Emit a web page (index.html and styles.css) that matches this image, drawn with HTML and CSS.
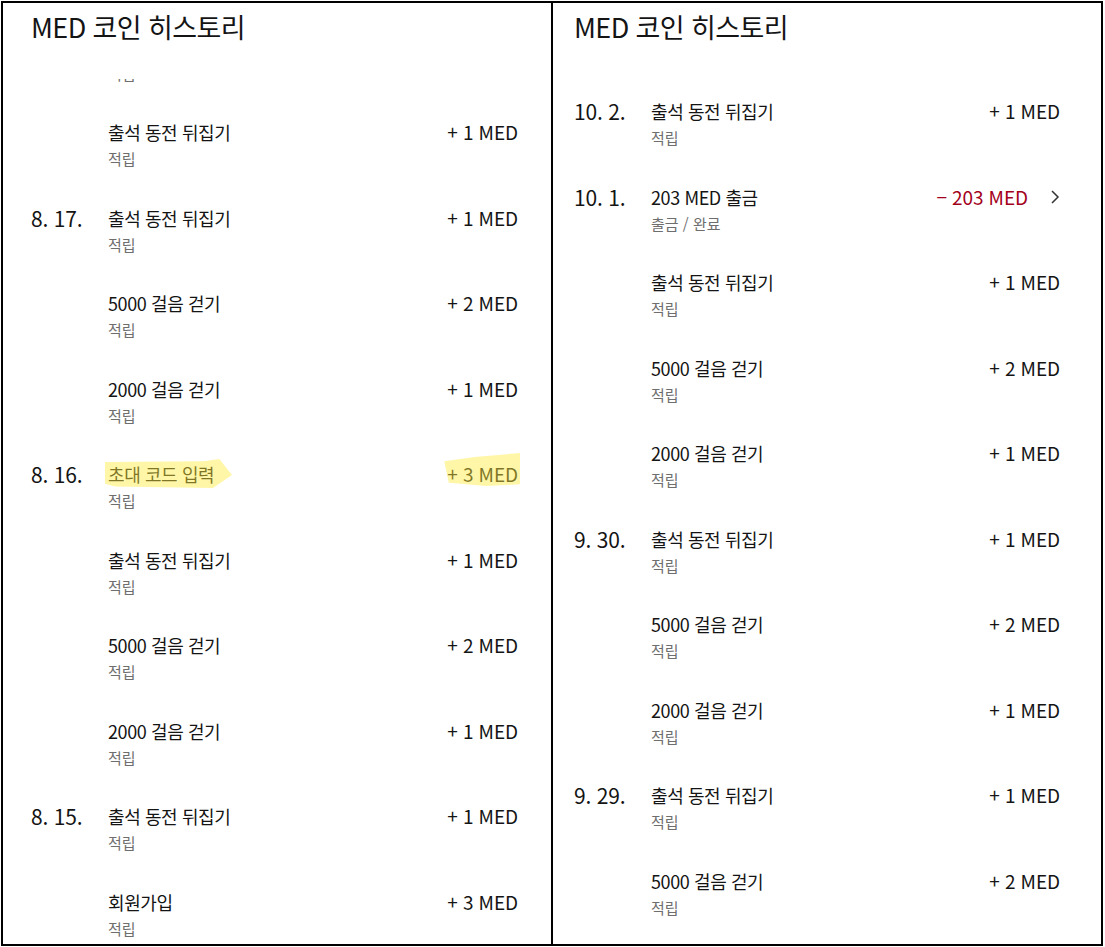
FILE: index.html
```html
<!DOCTYPE html>
<html lang="ko">
<head>
<meta charset="utf-8">
<title>MED 코인 히스토리</title>
<link rel="stylesheet" href="styles.css">
</head>
<body>
<div class="frame">
  <section class="panel panel-left">
    <header class="head"><h1>MED 코인 히스토리</h1></header>
    <div class="list">
      <div class="list-inner scrolled">
        <div class="row"><div class="date"></div><div class="info"><div class="name">2000 걸음 걷기</div><div class="sub">적립</div></div><div class="amt">+ 1 MED</div></div>
        <div class="row"><div class="date"></div><div class="info"><div class="name">출석 동전 뒤집기</div><div class="sub">적립</div></div><div class="amt">+ 1 MED</div></div>
        <div class="row"><div class="date">8. 17.</div><div class="info"><div class="name">출석 동전 뒤집기</div><div class="sub">적립</div></div><div class="amt">+ 1 MED</div></div>
        <div class="row"><div class="date"></div><div class="info"><div class="name">5000 걸음 걷기</div><div class="sub">적립</div></div><div class="amt">+ 2 MED</div></div>
        <div class="row"><div class="date"></div><div class="info"><div class="name">2000 걸음 걷기</div><div class="sub">적립</div></div><div class="amt">+ 1 MED</div></div>
        <div class="row"><div class="date">8. 16.</div><div class="info"><div class="name"><span class="mark mark-name">초대 코드 입력</span></div><div class="sub">적립</div></div><div class="amt"><span class="mark mark-amt">+ 3 MED</span></div></div>
        <div class="row"><div class="date"></div><div class="info"><div class="name">출석 동전 뒤집기</div><div class="sub">적립</div></div><div class="amt">+ 1 MED</div></div>
        <div class="row"><div class="date"></div><div class="info"><div class="name">5000 걸음 걷기</div><div class="sub">적립</div></div><div class="amt">+ 2 MED</div></div>
        <div class="row"><div class="date"></div><div class="info"><div class="name">2000 걸음 걷기</div><div class="sub">적립</div></div><div class="amt">+ 1 MED</div></div>
        <div class="row"><div class="date">8. 15.</div><div class="info"><div class="name">출석 동전 뒤집기</div><div class="sub">적립</div></div><div class="amt">+ 1 MED</div></div>
        <div class="row"><div class="date"></div><div class="info"><div class="name">회원가입</div><div class="sub">적립</div></div><div class="amt">+ 3 MED</div></div>
      </div>
    </div>
  </section>
  <section class="panel panel-right">
    <header class="head"><h1>MED 코인 히스토리</h1></header>
    <div class="list">
      <div class="list-inner">
        <div class="row"><div class="date">10. 2.</div><div class="info"><div class="name">출석 동전 뒤집기</div><div class="sub">적립</div></div><div class="amt">+ 1 MED</div></div>
        <div class="row"><div class="date">10. 1.</div><div class="info"><div class="name">203 MED 출금</div><div class="sub">출금 / 완료</div></div><div class="amt amt-out"><span class="neg">− 203 MED</span><svg class="chev" width="10" height="16" viewBox="0 0 10 16"><polyline points="2,2 8,8 2,14" fill="none" stroke="#333" stroke-width="1.5"/></svg></div></div>
        <div class="row"><div class="date"></div><div class="info"><div class="name">출석 동전 뒤집기</div><div class="sub">적립</div></div><div class="amt">+ 1 MED</div></div>
        <div class="row"><div class="date"></div><div class="info"><div class="name">5000 걸음 걷기</div><div class="sub">적립</div></div><div class="amt">+ 2 MED</div></div>
        <div class="row"><div class="date"></div><div class="info"><div class="name">2000 걸음 걷기</div><div class="sub">적립</div></div><div class="amt">+ 1 MED</div></div>
        <div class="row"><div class="date">9. 30.</div><div class="info"><div class="name">출석 동전 뒤집기</div><div class="sub">적립</div></div><div class="amt">+ 1 MED</div></div>
        <div class="row"><div class="date"></div><div class="info"><div class="name">5000 걸음 걷기</div><div class="sub">적립</div></div><div class="amt">+ 2 MED</div></div>
        <div class="row"><div class="date"></div><div class="info"><div class="name">2000 걸음 걷기</div><div class="sub">적립</div></div><div class="amt">+ 1 MED</div></div>
        <div class="row"><div class="date">9. 29.</div><div class="info"><div class="name">출석 동전 뒤집기</div><div class="sub">적립</div></div><div class="amt">+ 1 MED</div></div>
        <div class="row"><div class="date"></div><div class="info"><div class="name">5000 걸음 걷기</div><div class="sub">적립</div></div><div class="amt">+ 2 MED</div></div>
      </div>
    </div>
  </section>
</div>
</body>
</html>
```

FILE: styles.css
```css
html, body {
  margin: 0;
  padding: 0;
  background: #fff;
}
body {
  padding: 1px;
  font-family: "Noto Sans CJK KR", "Noto Sans", sans-serif;
  color: #141414;
}
.frame {
  display: flex;
  width: 1103px;
  height: 945px;
}
.panel {
  box-sizing: border-box;
  height: 945px;
  border: 2px solid #000;
  display: flex;
  flex-direction: column;
  overflow: hidden;
}
.panel-left {
  width: 552px;
}
.panel-right {
  width: 550px;
  border-left: none;
}
.head {
  height: 76px;
  flex: none;
  background: #fff;
  position: relative;
  z-index: 1;
}
.head h1 {
  margin: 0;
  font-size: 27px;
  font-weight: 400;
  line-height: 48px;
  letter-spacing: -0.6px;
}
.panel-left .head h1 { padding-left: 28px; }
.panel-right .head h1 { padding-left: 21px; }
.list {
  flex: 1;
  overflow: hidden;
}
.list-inner.scrolled {
  margin-top: -64.5px;
}
.panel-left .list-inner { padding: 0 33px 0 28px; }
.panel-right .list-inner { padding: 0 41px 0 21px; }
.row {
  box-sizing: border-box;
  height: 85.5px;
  padding-top: 20px;
  display: grid;
  grid-template-columns: 77px 1fr auto;
  align-items: start;
}
.date {
  font-size: 21px;
  line-height: 24px;
  font-weight: 400;
  letter-spacing: -0.2px;
}
.name {
  font-size: 18px;
  line-height: 24px;
  font-weight: 400;
  letter-spacing: -0.4px;
}
.sub {
  margin-top: 4px;
  font-size: 15px;
  line-height: 22px;
  color: #6e6e6e;
}
.amt {
  font-size: 19px;
  line-height: 24px;
  letter-spacing: -0.1px;
  text-align: right;
}
.amt-out {
  display: flex;
  align-items: center;
  gap: 22px;
}
.neg {
  color: #a3001b;
}
.chev {
  display: block;
}
.mark {
  position: relative;
  display: inline-block;
}
.mark::after {
  content: "";
  position: absolute;
  background: rgba(255, 235, 59, 0.45);
  pointer-events: none;
}
.mark-name::after {
  left: -3px;
  top: -3px;
  width: 127px;
  height: 29px;
  clip-path: polygon(0 10%, 78% 8%, 90% 0, 100% 55%, 85% 100%, 8% 95%, 0 85%);
}
.mark-amt::after {
  left: -3px;
  top: -9px;
  width: 76px;
  height: 33px;
  clip-path: polygon(0 25%, 40% 12%, 100% 0, 100% 95%, 55% 100%, 6% 90%);
}
```
